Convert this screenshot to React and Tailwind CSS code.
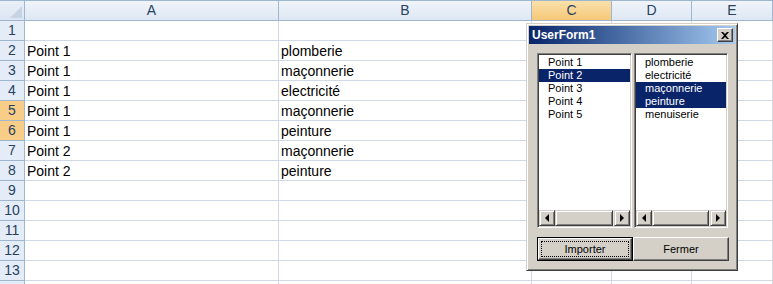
import React from 'react';

const cols = [
  { id: 'A', w: 'w-[254px]' },
  { id: 'B', w: 'w-[253px]' },
  { id: 'C', w: 'w-[80px]', active: true },
  { id: 'D', w: 'w-[80px]' },
  { id: 'E', w: 'w-[81px]' },
];

const cells = {
  2: ['Point 1', 'plomberie'],
  3: ['Point 1', 'maçonnerie'],
  4: ['Point 1', 'electricité'],
  5: ['Point 1', 'maçonnerie'],
  6: ['Point 1', 'peinture'],
  7: ['Point 2', 'maçonnerie'],
  8: ['Point 2', 'peinture'],
};

const rows = [1, 2, 3, 4, 5, 6, 7, 8, 9, 10, 11, 12, 13, 14];

const points = ['Point 1', 'Point 2', 'Point 3', 'Point 4', 'Point 5'];
const works = ['plomberie', 'electricité', 'maçonnerie', 'peinture', 'menuiserie'];

function Arrow({ dir }) {
  return (
    <svg width="6" height="8" viewBox="0 0 6 8">
      {dir === 'left' ? <polygon points="5,0 5,8 1,4" fill="#000" /> : <polygon points="1,0 1,8 5,4" fill="#000" />}
    </svg>
  );
}

function ScrollBar({ thumb }) {
  const raised =
    'border border-t-[#d4d0c8] border-l-[#d4d0c8] border-r-[#404040] border-b-[#404040] shadow-[inset_1px_1px_0_#fff,inset_-1px_-1px_0_#808080] bg-[#d4d0c8]';
  return (
    <div className="flex h-[16px] bg-[#e6e3dc]">
      <div className={`w-[16px] h-[16px] flex items-center justify-center ${raised}`}>
        <Arrow dir="left" />
      </div>
      <div className={`${thumb} h-[16px] ${raised}`} />
      <div className="flex-1" />
      <div className={`w-[16px] h-[16px] flex items-center justify-center ${raised}`}>
        <Arrow dir="right" />
      </div>
    </div>
  );
}

function ListBox({ items, selected, width, thumb }) {
  return (
    <div
      className={`${width} h-[175px] flex flex-col bg-white border border-t-[#808080] border-l-[#808080] border-r-white border-b-white shadow-[inset_1px_1px_0_#404040,inset_-1px_-1px_0_#d4d0c8] p-[1px]`}
    >
      <div className="flex-1 pt-[1px]">
        {items.map((it, i) => (
          <div
            key={it}
            className={`h-[13px] leading-[13px] pl-[9px] text-[11px] ${
              selected.includes(i) ? 'bg-[#0a246a] text-white' : 'text-black'
            }`}
          >
            {it}
          </div>
        ))}
      </div>
      <ScrollBar thumb={thumb} />
    </div>
  );
}

function UserForm() {
  return (
    <div
      className="absolute left-[526px] top-[23px] w-[212px] h-[248px] bg-[#d4d0c8] border border-t-[#d4d0c8] border-l-[#d4d0c8] border-r-[#404040] border-b-[#404040] shadow-[inset_1px_1px_0_#fff,inset_-1px_-1px_0_#808080] p-[2px] flex flex-col"
      style={{ fontFamily: '"Liberation Sans", Arial, sans-serif' }}
    >
      {/* title bar */}
      <div className="h-[18px] flex items-center justify-between bg-gradient-to-r from-[#0a246a] to-[#a6caf0] pl-[3px] pr-[2px]">
        <span className="text-white font-bold text-[12px] leading-none">UserForm1</span>
        <div className="w-[16px] h-[14px] flex items-center justify-center bg-[#d4d0c8] border border-t-white border-l-white border-r-[#404040] border-b-[#404040] shadow-[inset_-1px_-1px_0_#808080]">
          <svg width="8" height="7" viewBox="0 0 8 7">
            <path d="M0 0 H2 L4 2 L6 0 H8 L5 3.5 L8 7 H6 L4 5 L2 7 H0 L3 3.5 Z" fill="#000" />
          </svg>
        </div>
      </div>

      <div className="flex flex-col pl-[8px] pt-[9px]">
        <div className="flex gap-[2px]">
          <ListBox items={points} selected={[1]} width="w-[95px]" thumb="w-[58px]" />
          <ListBox items={works} selected={[2, 3]} width="w-[94px]" thumb="w-[57px]" />
        </div>

        <div className="flex mt-[9px]">
          <div className="w-[96px] h-[24px] border border-black bg-[#d4d0c8]">
            <div className="h-full border border-t-white border-l-white border-r-[#404040] border-b-[#404040] shadow-[inset_-1px_-1px_0_#808080] p-[2px]">
              <div className="h-full outline-1 outline-dotted outline-black -outline-offset-1 flex items-center justify-center text-[11px] text-black">
                Importer
              </div>
            </div>
          </div>
          <div className="w-[96px] h-[24px] flex items-center justify-center bg-[#d4d0c8] border border-t-white border-l-white border-r-[#404040] border-b-[#404040] shadow-[inset_-1px_-1px_0_#808080] text-[11px] text-black">
            Fermer
          </div>
        </div>
      </div>
    </div>
  );
}

export default function App() {
  return (
    <div
      className="relative w-[773px] h-[284px] overflow-hidden bg-white"
      style={{ fontFamily: '"Liberation Sans", Arial, sans-serif' }}
    >
      {/* column headers */}
      <div className="flex h-[21px] border-t border-[#9eb6ce]">
        <div className="w-[25px] h-[20px] relative bg-gradient-to-b from-[#eaf0f8] to-[#dbe5f2] border-r border-b border-[#9eb6ce]">
          <svg className="absolute right-[2px] bottom-[2px]" width="12" height="12" viewBox="0 0 12 12">
            <polygon points="12,0 12,12 0,12" fill="#c5d3e4" />
          </svg>
        </div>
        {cols.map((c) => (
          <div
            key={c.id}
            className={`${c.w} h-[20px] flex items-center justify-center text-[14px] border-r border-b border-[#9eb6ce] ${
              c.active
                ? 'bg-gradient-to-b from-[#fae0aa] to-[#f5c877] text-[#27415f]'
                : 'bg-gradient-to-b from-[#f0f4fa] to-[#dde7f3] text-[#27415f]'
            }`}
          >
            {c.id}
          </div>
        ))}
      </div>

      {/* rows (row 14 is only a sliver at the bottom edge) */}
      {rows.map((r) => {
        const active = r === 5 || r === 6;
        const data = cells[r] || [];
        return (
          <div key={r} className="flex h-[20px]">
            <div
              className={`w-[25px] h-[20px] flex items-center justify-center text-[14px] text-[#27415f] border-r border-b border-[#9eb6ce] ${
                active ? 'bg-[#f8cd87]' : 'bg-[#e4ecf7]'
              }`}
            >
              {r < 14 ? r : ''}
            </div>
            {cols.map((c, i) => (
              <div
                key={c.id}
                className={`${c.w} h-[20px] flex items-center pl-[2px] pt-[1px] text-[14px] text-black border-r border-b border-[#d0d7e5]`}
              >
                {data[i] || ''}
              </div>
            ))}
          </div>
        );
      })}

      <UserForm />
    </div>
  );
}
